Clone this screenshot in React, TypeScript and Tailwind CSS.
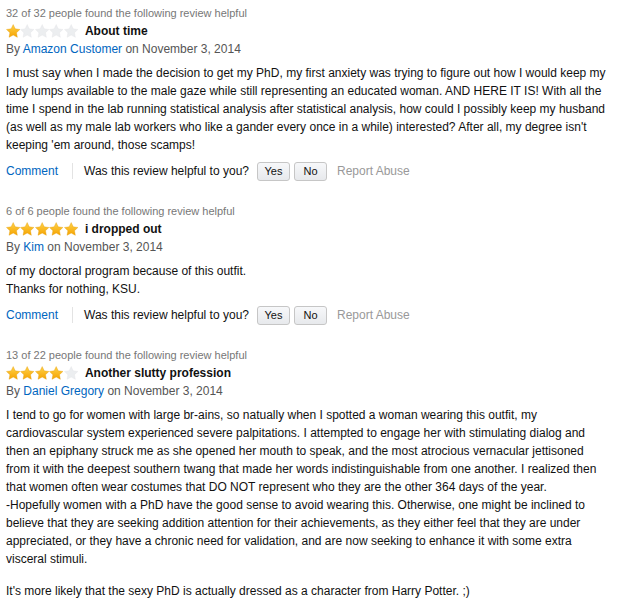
import React from "react";

type Review = {
  helpful: string;
  stars: number;
  title: string;
  author: string;
  date: string;
  lines: string[];
  extra?: string;
};

const reviews: Review[] = [
  {
    helpful: "32 of 32 people found the following review helpful",
    stars: 1,
    title: "About time",
    author: "Amazon Customer",
    date: "November 3, 2014",
    lines: [
      "I must say when I made the decision to get my PhD, my first anxiety was trying to figure out how I would keep my",
      "lady lumps available to the male gaze while still representing an educated woman. AND HERE IT IS! With all the",
      "time I spend in the lab running statistical analysis after statistical analysis, how could I possibly keep my husband",
      "(as well as my male lab workers who like a gander every once in a while) interested? After all, my degree isn't",
      "keeping 'em around, those scamps!",
    ],
  },
  {
    helpful: "6 of 6 people found the following review helpful",
    stars: 5,
    title: "i dropped out",
    author: "Kim",
    date: "November 3, 2014",
    lines: ["of my doctoral program because of this outfit.", "Thanks for nothing, KSU."],
  },
  {
    helpful: "13 of 22 people found the following review helpful",
    stars: 4,
    title: "Another slutty profession",
    author: "Daniel Gregory",
    date: "November 3, 2014",
    lines: [
      "I tend to go for women with large br-ains, so natually when I spotted a woman wearing this outfit, my",
      "cardiovascular system experienced severe palpitations. I attempted to engage her with stimulating dialog and",
      "then an epiphany struck me as she opened her mouth to speak, and the most atrocious vernacular jettisoned",
      "from it with the deepest southern twang that made her words indistinguishable from one another. I realized then",
      "that women often wear costumes that DO NOT represent who they are the other 364 days of the year.",
      "-Hopefully women with a PhD have the good sense to avoid wearing this. Otherwise, one might be inclined to",
      "believe that they are seeking addition attention for their achievements, as they either feel that they are under",
      "appreciated, or they have a chronic need for validation, and are now seeking to enhance it with some extra",
      "visceral stimuli.",
    ],
    extra: "It's more likely that the sexy PhD is actually dressed as a character from Harry Potter. ;)",
  },
];

function Star({ filled }: { filled: boolean }) {
  return (
    <svg width="14.4" height="14" viewBox="0 0 24 23" className="block">
      <defs>
        <linearGradient id="gold" x1="0" y1="0" x2="0" y2="1">
          <stop offset="0" stopColor="#ffd24a" />
          <stop offset="1" stopColor="#f5a300" />
        </linearGradient>
      </defs>
      <path
        d="M12 0.8l3.4 7.1 7.8 1-5.7 5.4 1.4 7.7L12 18.3l-6.9 3.7 1.4-7.7L0.8 8.9l7.8-1z"
        fill={filled ? "url(#gold)" : "#eceef0"}
        stroke={filled ? "#e39b00" : "#e2e4e6"}
        strokeWidth="0.6"
      />
    </svg>
  );
}

function ReviewBlock({ r, last }: { r: Review; last?: boolean }) {
  return (
    <div className={last ? "" : "mb-[20px]"}>
      <div className="text-[11px] leading-[18px] text-[#777]">{r.helpful}</div>
      <div className="flex items-center h-[18px]">
        <div className="flex">
          {[0, 1, 2, 3, 4].map((i) => (
            <Star key={i} filled={i < r.stars} />
          ))}
        </div>
        <span className="ml-[7px] text-[12px] font-bold text-[#111]">{r.title}</span>
      </div>
      <div className="text-[12px] leading-[18px] text-[#555]">
        By <span className="text-[#0066c0]">{r.author}</span> on {r.date}
      </div>
      <div className="mt-[6px] text-[12px] leading-[18px] text-[#111] whitespace-nowrap">
        <p>
          {r.lines.map((l, i) => (
            <React.Fragment key={i}>
              {l}
              {i < r.lines.length - 1 && <br />}
            </React.Fragment>
          ))}
        </p>
        {r.extra && <p className="mt-[14px]">{r.extra}</p>}
      </div>
      {!last && (
        <div className="mt-[6px] flex items-center h-[22px] text-[12px]">
          <span className="text-[#0066c0]">Comment</span>
          <span className="ml-[14px] mr-[11px] h-[16px] w-px bg-[#e3e3e3]" />
          <span className="text-[#111]">Was this review helpful to you?</span>
          <span className="ml-[8px] flex items-center justify-center w-[33px] h-[19px] rounded-[3px] border border-[#c6c6c6] bg-gradient-to-b from-[#f7f8fa] to-[#e7e9ec] text-[11px] text-[#111]">
            Yes
          </span>
          <span className="ml-[4px] flex items-center justify-center w-[33px] h-[19px] rounded-[3px] border border-[#c6c6c6] bg-gradient-to-b from-[#f7f8fa] to-[#e7e9ec] text-[11px] text-[#111]">
            No
          </span>
          <span className="ml-[10px] text-[#999]">Report Abuse</span>
        </div>
      )}
    </div>
  );
}

export default function App() {
  return (
    <div className="w-[621px] h-[600px] overflow-hidden bg-white pl-[6px] pt-[4px] font-['Liberation_Sans',Arial,sans-serif]">
      {reviews.map((r, i) => (
        <ReviewBlock key={i} r={r} last={i === reviews.length - 1} />
      ))}
    </div>
  );
}
